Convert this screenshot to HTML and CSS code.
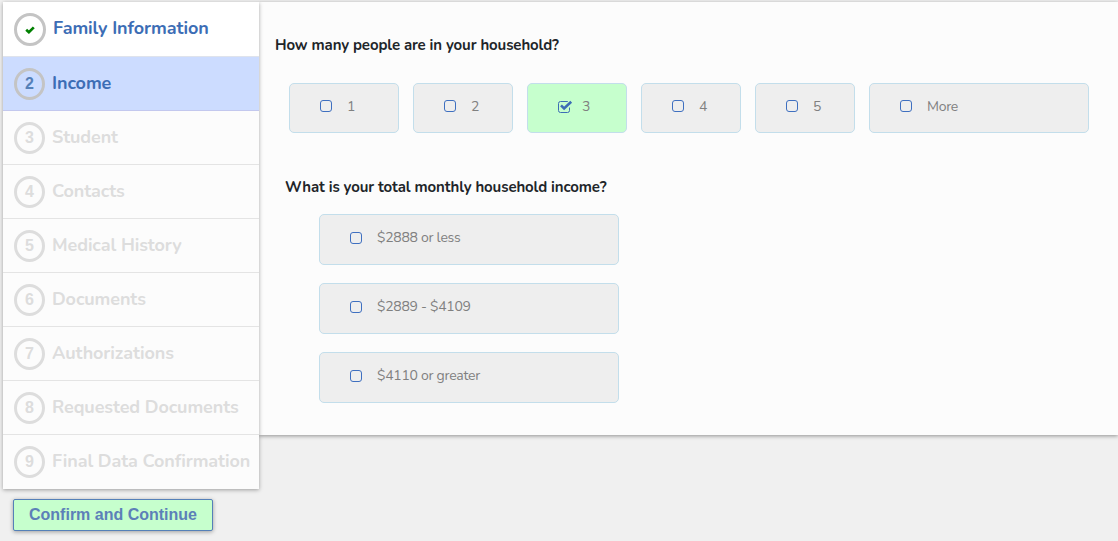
FILE: index.html
```
<!DOCTYPE html>
<html lang="en">
<head>
    <meta charset="UTF-8">
    <meta name="viewport" content="width=device-width, initial-scale=1.0">
    <title>Income</title>
    <link rel="stylesheet" href="styles.css">
</head>
<body>

<div class="page">
    <div class="sidebar">
        <ul class="steps">
            <li class="step done">
                <span class="circle"><svg class="tick" viewBox="0 0 10 8"><path d="M1.2 3.8 L3.9 6.2 L8.8 1.4"/></svg></span>
                <span class="step-name">Family Information</span>
            </li>
            <li class="step active"><span class="circle">2</span><span class="step-name">Income</span></li>
            <li class="step"><span class="circle">3</span><span class="step-name">Student</span></li>
            <li class="step"><span class="circle">4</span><span class="step-name">Contacts</span></li>
            <li class="step"><span class="circle">5</span><span class="step-name">Medical History</span></li>
            <li class="step"><span class="circle">6</span><span class="step-name">Documents</span></li>
            <li class="step"><span class="circle">7</span><span class="step-name">Authorizations</span></li>
            <li class="step"><span class="circle">8</span><span class="step-name">Requested Documents</span></li>
            <li class="step"><span class="circle">9</span><span class="step-name">Final Data Confirmation</span></li>
        </ul>
        <button type="button" class="btn">Confirm and Continue</button>
    </div>

    <div class="content">
        <h2 class="question">How many people are in your household?</h2>
        <div class="people">
            <div class="option first"><span class="box"></span><span>1</span></div>
            <div class="option"><span class="box"></span><span>2</span></div>
            <div class="option selected">
                <svg class="checked" viewBox="0 0 15 13"><path class="frame" d="M11.5 7.5V10.5A2 2 0 0 1 9.5 12.5H2.5A2 2 0 0 1 .5 10.5V3.5A2 2 0 0 1 2.5 1.5H9.8"/><path class="mark" d="M3 5.4 L6.1 8.4 L13.2 1.8"/></svg>
                <span>3</span>
            </div>
            <div class="option"><span class="box"></span><span>4</span></div>
            <div class="option"><span class="box"></span><span>5</span></div>
            <div class="option more"><span class="box"></span><span>More</span></div>
        </div>

        <h2 class="question income-question">What is your total monthly household income?</h2>
        <div class="income">
            <div class="option"><span class="box"></span><span>$2888 or less</span></div>
            <div class="option"><span class="box"></span><span>$2889 - $4109</span></div>
            <div class="option"><span class="box"></span><span>$4110 or greater</span></div>
        </div>
    </div>
</div>

</body>
</html>
```
FILE: styles.css
```
* {
    margin: 0;
    padding: 0;
    box-sizing: border-box;
}

body {
    height: 541px;
    overflow: hidden;
    background-color: #f0f0f0;
    font-family: Nunito, Lato, sans-serif;
}

.page {
    display: flex;
    align-items: flex-start;
    padding: 2px 0 0 3px;
}

/* left menu */
.sidebar {
    position: relative;
    z-index: 1;
    width: 256px;
    flex-shrink: 0;
}

.steps {
    list-style: none;
    box-shadow: 0 1px 4px rgba(0, 0, 0, 0.35);
    background: #fcfcfc;
}

.step {
    display: flex;
    align-items: center;
    height: 54px;
    padding-left: 11px;
    border-top: 1px solid #e4e4e4;
    color: #ddd;
}

.step.done {
    background: #fff;
    border-top: none;
    color: #3c6db5;
}

.step.active {
    background: #ccdcff;
    border-top-color: #dfe3ec;
    color: #3c6db5;
}

.step.active + .step {
    border-top-color: #c3c8ee;
}

.step:last-child {
    height: 55px;
    padding-bottom: 1px;
}

.circle {
    display: flex;
    align-items: center;
    justify-content: center;
    width: 31px;
    height: 32px;
    border: 3px solid #ddd;
    border-radius: 50%;
    font: bold 16px "Liberation Sans", Arial, sans-serif;
}

.done .circle {
    width: 32px;
    height: 33px;
    margin-top: 1px;
    border-color: #c4c4c4;
}

.active .circle {
    border-color: #c4c4c4;
    color: #5580b8;
}

.tick {
    width: 10px;
    height: 8px;
    margin-top: 1px;
    fill: none;
    stroke: #008000;
    stroke-width: 2.7;
}

.step-name {
    margin: -1px 0 0 7px;
    font-size: 18px;
    font-weight: 700;
    letter-spacing: -0.1px;
    white-space: nowrap;
}

.done .step-name {
    margin-top: -3px;
}

.btn {
    display: block;
    width: 200px;
    height: 32px;
    margin: 10px 0 0 10px;
    background: #c6ffcd;
    border: 1px solid #5580b8;
    border-radius: 2px;
    box-shadow: 0 1px 4px rgba(0, 0, 0, 0.35);
    color: #5c80b8;
    font: bold 16px "Liberation Sans", Arial, sans-serif;
    cursor: pointer;
}

/* questions */
.content {
    flex: 1;
    height: 433px;
    padding: 32px 0 0 16px;
    background: #fcfcfc;
    box-shadow: 0 1px 4px rgba(0, 0, 0, 0.4);
}

.question {
    height: 22px;
    line-height: 22px;
    font-size: 15px;
    font-weight: 700;
    letter-spacing: -0.11px;
    color: #212529;
}

.people {
    display: flex;
    gap: 14px;
    margin: 27px 0 0 14px;
}

.option {
    display: flex;
    align-items: center;
    gap: 15px;
    width: 100px;
    height: 50px;
    padding: 0 0 4px 30px;
    background: #eee;
    border: 1px solid #c3deeb;
    border-radius: 5px;
    color: #808080;
    font-size: 14px;
    letter-spacing: -0.27px;
}

.option.first {
    width: 110px;
}

.option.more {
    width: 220px;
}

.option.selected {
    gap: 9px;
    background: #c6ffcd;
}

.box {
    width: 12px;
    height: 12px;
    border: 1px solid #3f70c0;
    border-radius: 3px;
}

.checked {
    width: 15px;
    height: 13px;
    fill: none;
    stroke: #3c6db5;
}

.checked .mark {
    stroke-width: 2.6;
}

.income-question {
    margin: 43px 0 0 10px;
}

.income {
    display: grid;
    gap: 18px;
    margin: 16px 0 0 44px;
}

.income .option {
    width: 300px;
    height: 51px;
}
```
